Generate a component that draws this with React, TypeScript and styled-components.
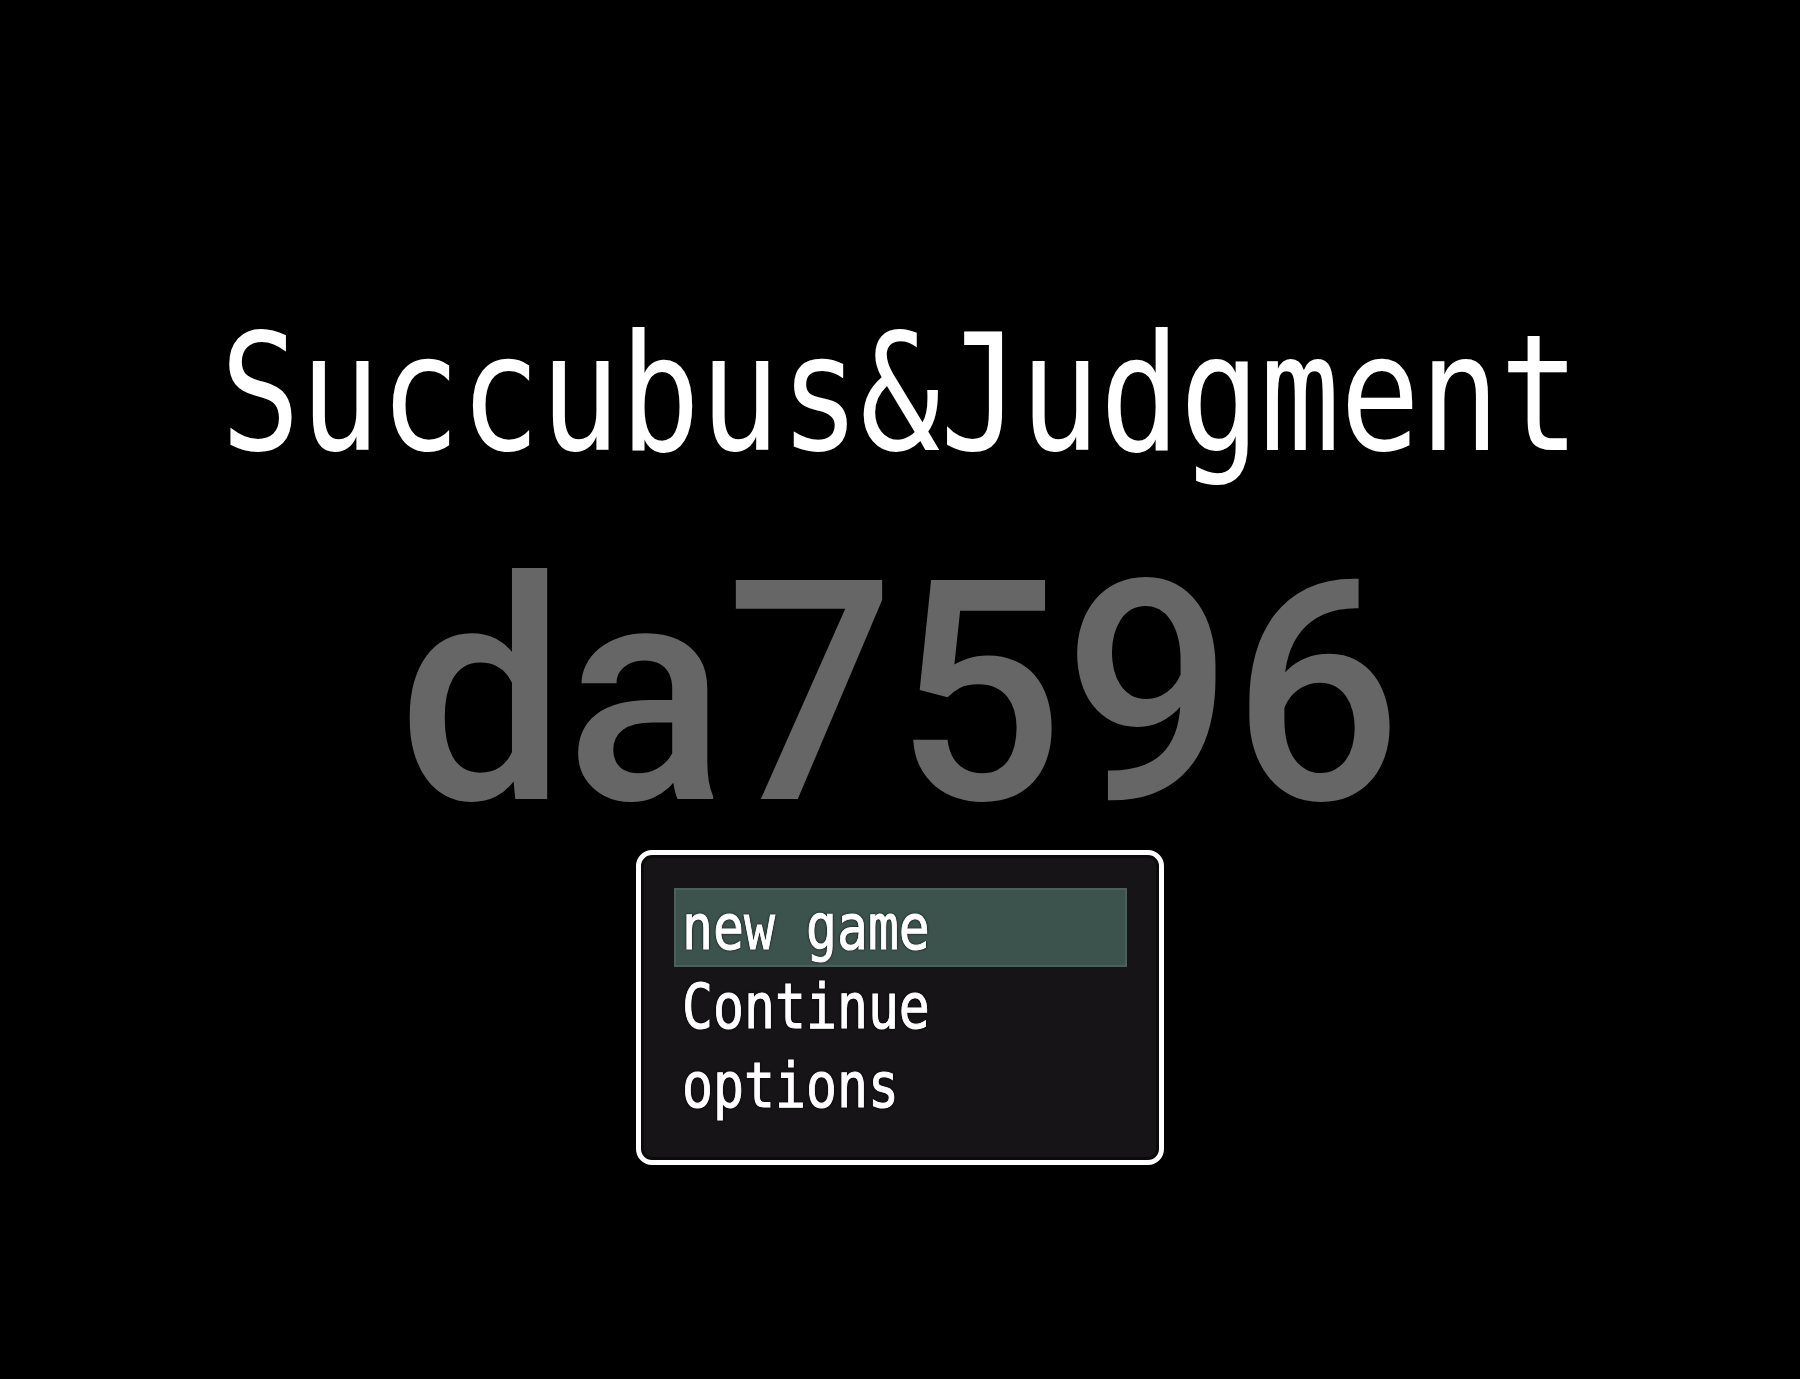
import styled, { createGlobalStyle } from "styled-components";

const GlobalStyle = createGlobalStyle`
  html, body {
    margin: 0;
    padding: 0;
    background: #000;
  }
`;

const Screen = styled.div`
  width: 1800px;
  height: 1379px;
  background: #000;
  display: flex;
  flex-direction: column;
  align-items: center;
  padding-top: 313px;
  box-sizing: border-box;
  overflow: hidden;
`;

const Title = styled.h1`
  margin: 0;
  font-family: "DejaVu Sans Mono", "Liberation Mono", monospace;
  font-weight: 400;
  font-size: 162px;
  line-height: 162px;
  color: #fff;
  white-space: nowrap;
  transform: scaleX(0.82);
`;

const Code = styled.div`
  margin-top: 64px;
  font-family: Roboto, "Liberation Sans", sans-serif;
  font-weight: 500;
  font-size: 308px;
  line-height: 310px;
  color: #666;
  white-space: nowrap;
  transform: scaleX(0.965);
`;

const Window = styled.div`
  margin-top: 1px;
  width: 528px;
  box-sizing: border-box;
  border: 5px solid #fff;
  border-radius: 16px;
  background: #161416;
  box-shadow: inset 0 0 0 3px #0c0b0c;
  padding: 33px 32px 35px 33px;
  display: flex;
  flex-direction: column;
`;

const Row = styled.div<{ $selected?: boolean }>`
  height: 79px;
  box-sizing: border-box;
  padding-left: 8px;
  background: ${(p) => (p.$selected ? "#3c524c" : "transparent")};
  box-shadow: ${(p) => (p.$selected ? "inset 0 0 0 2px #4c5f58" : "none")};
  font-family: "DejaVu Sans Mono", "Liberation Mono", monospace;
  font-size: 62px;
  line-height: 79px;
  color: #fff;
  white-space: nowrap;
`;

const Label = styled.span`
  display: inline-block;
  transform: scaleX(0.83);
  transform-origin: left center;
  -webkit-text-stroke: 1px #fff;
  text-shadow: 0 0 3px rgba(0, 0, 0, 0.9), 0 0 2px rgba(0, 0, 0, 0.9);
`;

const items = ["new game", "Continue", "options"];

export default function App() {
  return (
    <>
      <GlobalStyle />
      <Screen>
        <Title>Succubus&amp;Judgment</Title>
        <Code>da7596</Code>
        <Window>
          {items.map((item, i) => (
            <Row key={item} $selected={i === 0}>
              <Label>{item}</Label>
            </Row>
          ))}
        </Window>
      </Screen>
    </>
  );
}
